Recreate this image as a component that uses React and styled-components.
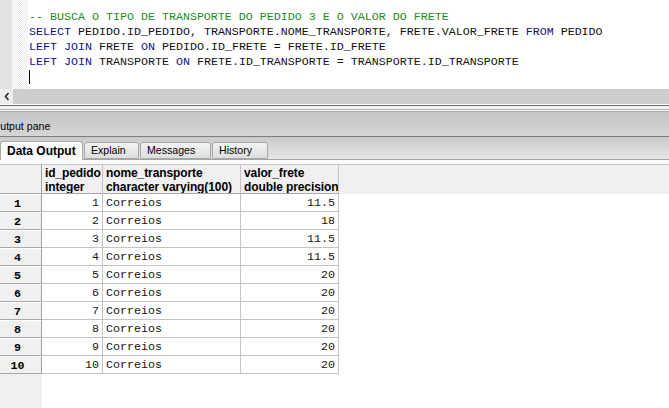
import React from "react";
import styled, { createGlobalStyle } from "styled-components";

const GlobalStyle = createGlobalStyle`
  html, body { margin: 0; padding: 0; background: #fff; }
  body { font-family: "Liberation Sans", Arial, sans-serif; }
`;

const code = [
  [["c", "-- BUSCA O TIPO DE TRANSPORTE DO PEDIDO 3 E O VALOR DO FRETE"]],
  [
    ["k", "SELECT"],
    ["t", " PEDIDO.ID_PEDIDO, TRANSPORTE.NOME_TRANSPORTE, FRETE.VALOR_FRETE "],
    ["k", "FROM"],
    ["t", " PEDIDO"],
  ],
  [
    ["k", "LEFT JOIN"],
    ["t", " FRETE "],
    ["k", "ON"],
    ["t", " PEDIDO.ID_FRETE = FRETE.ID_FRETE"],
  ],
  [
    ["k", "LEFT JOIN"],
    ["t", " TRANSPORTE "],
    ["k", "ON"],
    ["t", " FRETE.ID_TRANSPORTE = TRANSPORTE.ID_TRANSPORTE"],
  ],
];

const rows = [
  [1, "Correios", "11.5"],
  [2, "Correios", "18"],
  [3, "Correios", "11.5"],
  [4, "Correios", "11.5"],
  [5, "Correios", "20"],
  [6, "Correios", "20"],
  [7, "Correios", "20"],
  [8, "Correios", "20"],
  [9, "Correios", "20"],
  [10, "Correios", "20"],
];

const tabs = [
  { label: "Data Output", width: 83, active: true },
  { label: "Explain", width: 55 },
  { label: "Messages", width: 71 },
  { label: "History", width: 56 },
];

const App = () => {
  return (
    <Page>
      <GlobalStyle />
      <Editor>
        <Gutter />
        <Margin />
        <Code>
          {code.map((line, i) => (
            <Line key={i}>
              {line.map(([kind, text], j) => (
                <Token key={j} $kind={kind}>{text}</Token>
              ))}
            </Line>
          ))}
          <Line>
            <Caret />
          </Line>
        </Code>
      </Editor>
      <HScroll>
        <ArrowButton>
          <svg width="6" height="9" viewBox="0 0 6 9">
            <path d="M4.5 1 L1.5 4.5 L4.5 8" fill="none" stroke="#2a2a2a" strokeWidth="1.6" />
          </svg>
        </ArrowButton>
        <Track />
      </HScroll>
      <Splitter />
      <PaneTitle>
        <span>Output pane</span>
      </PaneTitle>
      <TabStrip>
        {tabs.map((t) => (
          <Tab key={t.label} $active={t.active} $width={t.width}>
            {t.label}
          </Tab>
        ))}
      </TabStrip>
      <GridArea>
        <Band />
        <Grid>
          <HeadCell $corner />
          <HeadCell>
            id_pedido
            <br />
            integer
          </HeadCell>
          <HeadCell>
            nome_transporte
            <br />
            character varying(100)
          </HeadCell>
          <HeadCell>
            valor_frete
            <br />
            double precision
          </HeadCell>
          <HeadFiller />
          {rows.map(([id, nome, valor]) => (
            <React.Fragment key={id}>
              <RowNum>{id}</RowNum>
              <Cell $right>{id}</Cell>
              <Cell>{nome}</Cell>
              <Cell $right>{valor}</Cell>
              <Filler />
            </React.Fragment>
          ))}
        </Grid>
      </GridArea>
    </Page>
  );
};

const Page = styled.div`
  width: 669px;
  height: 408px;
  display: flex;
  flex-direction: column;
  overflow: hidden;
  background: #fff;
`;

const Editor = styled.div`
  height: 89px;
  display: flex;
  background: #fff;
`;

const Gutter = styled.div`
  width: 12px;
  background: #e2e2e2;
`;

const Margin = styled.div`
  width: 16px;
  background-color: #fff;
  background-image: repeating-conic-gradient(#ececec 0 25%, #fff 0 50%);
  background-size: 2px 2px;
`;

const Code = styled.div`
  flex: 1;
  padding: 10px 0 0 1px;
  font-family: "Liberation Mono", "Courier New", monospace;
  font-size: 11.67px;
  color: #111;
`;

const Line = styled.div`
  height: 15px;
  line-height: 15px;
  white-space: pre;
`;

const Token = styled.span`
  color: ${(p) => (p.$kind === "c" ? "#1b8c1b" : p.$kind === "k" ? "#10108a" : "#111")};
`;

const Caret = styled.span`
  display: inline-block;
  width: 1px;
  height: 14px;
  background: #000;
  vertical-align: top;
`;

const HScroll = styled.div`
  height: 15px;
  display: flex;
  background: #d0d0d0;
`;

const ArrowButton = styled.div`
  width: 13px;
  display: flex;
  align-items: center;
  justify-content: center;
  background: #eeeeee;
`;

const Track = styled.div`
  flex: 1;
  background: #cdcdcd;
`;

const Splitter = styled.div`
  height: 7px;
  background: #f2f2f2;
  border-top: 1px solid #ffffff;
  box-sizing: border-box;
  box-shadow: inset 0 1px 0 #6e6e6e, inset 0 4px 0 #f4f4f4, inset 0 5px 0 #b4b4b4;
`;

const PaneTitle = styled.div`
  height: 26px;
  box-sizing: border-box;
  border-top: 1px solid #b0b0b0;
  border-bottom: 1px solid #7e7e7e;
  background: linear-gradient(#c4c4c4, #d6d6d6);
  display: flex;
  align-items: center;
  overflow: hidden;
  font-size: 10.6px;
  color: #000;

  span {
    margin-left: -8px;
    padding-top: 4px;
  }
`;

const TabStrip = styled.div`
  height: 23px;
  box-sizing: border-box;
  display: flex;
  align-items: flex-end;
  gap: 1px;
  border-bottom: 1px solid #a4a4a4;
  background: linear-gradient(#c9c9c9, #e6e6e6);
`;

const Tab = styled.div`
  width: ${(p) => p.$width}px;
  height: ${(p) => (p.$active ? 19 : 17)}px;
  box-sizing: border-box;
  margin-bottom: ${(p) => (p.$active ? -1 : 0)}px;
  padding-left: 6px;
  border: 1px solid #a8a8a8;
  border-bottom: ${(p) => (p.$active ? "none" : "1px solid #a8a8a8")};
  border-radius: 3px 3px 0 0;
  background: ${(p) => (p.$active ? "#fbfbfb" : "linear-gradient(#f2f2f2, #dedede)")};
  font-size: ${(p) => (p.$active ? 12 : 10.6)}px;
  font-weight: ${(p) => (p.$active ? 700 : 400)};
  color: #000;
  line-height: ${(p) => (p.$active ? 19 : 15)}px;
  white-space: nowrap;
  overflow: hidden;
`;

const GridArea = styled.div`
  flex: 1;
  display: flex;
  flex-direction: column;
  background: linear-gradient(to right, #f0f0f0 42px, #ffffff 42px);
`;

const Band = styled.div`
  height: 4px;
  background: #fafafa;
`;

const Grid = styled.div`
  display: grid;
  grid-template-columns: 42px 61px 138px 98px 1fr;
  grid-template-rows: 30px;
  grid-auto-rows: 18px;
`;

const HeadCell = styled.div`
  box-sizing: border-box;
  background: #f0f0f0;
  border-right: 1px solid ${(p) => (p.$corner ? "#a0a0a0" : "#c4c4c4")};
  border-bottom: 1px solid #a8a8a8;
  border-top: 1px solid #c4c4c4;
  padding: 1px 0 0 3px;
  font-size: 12px;
  font-weight: 700;
  line-height: 14px;
  letter-spacing: -0.1px;
  color: #000;
  white-space: nowrap;
  overflow: hidden;
`;

const HeadFiller = styled.div`
  background: #f0f0f0;
  border-top: 1px solid #c4c4c4;
`;

const RowNum = styled.div`
  box-sizing: border-box;
  background: #f0f0f0;
  border-top: 1px solid #ffffff;
  border-right: 1px solid #a0a0a0;
  border-bottom: 1px solid #a8a8a8;
  padding: 1px 6px 0 0;
  text-align: center;
  font-family: "Liberation Mono", "Courier New", monospace;
  font-size: 11.67px;
  font-weight: 700;
  line-height: 16px;
  color: #000;
`;

const Cell = styled.div`
  box-sizing: border-box;
  border-right: 1px solid #c4c4c4;
  border-bottom: 1px solid #c4c4c4;
  padding: 2px 3px 0;
  text-align: ${(p) => (p.$right ? "right" : "left")};
  font-family: "Liberation Mono", "Courier New", monospace;
  font-size: 11.67px;
  line-height: 15px;
  color: #151515;
  white-space: nowrap;
  overflow: hidden;
`;

const Filler = styled.div`
  background: #fff;
`;

export default App;
